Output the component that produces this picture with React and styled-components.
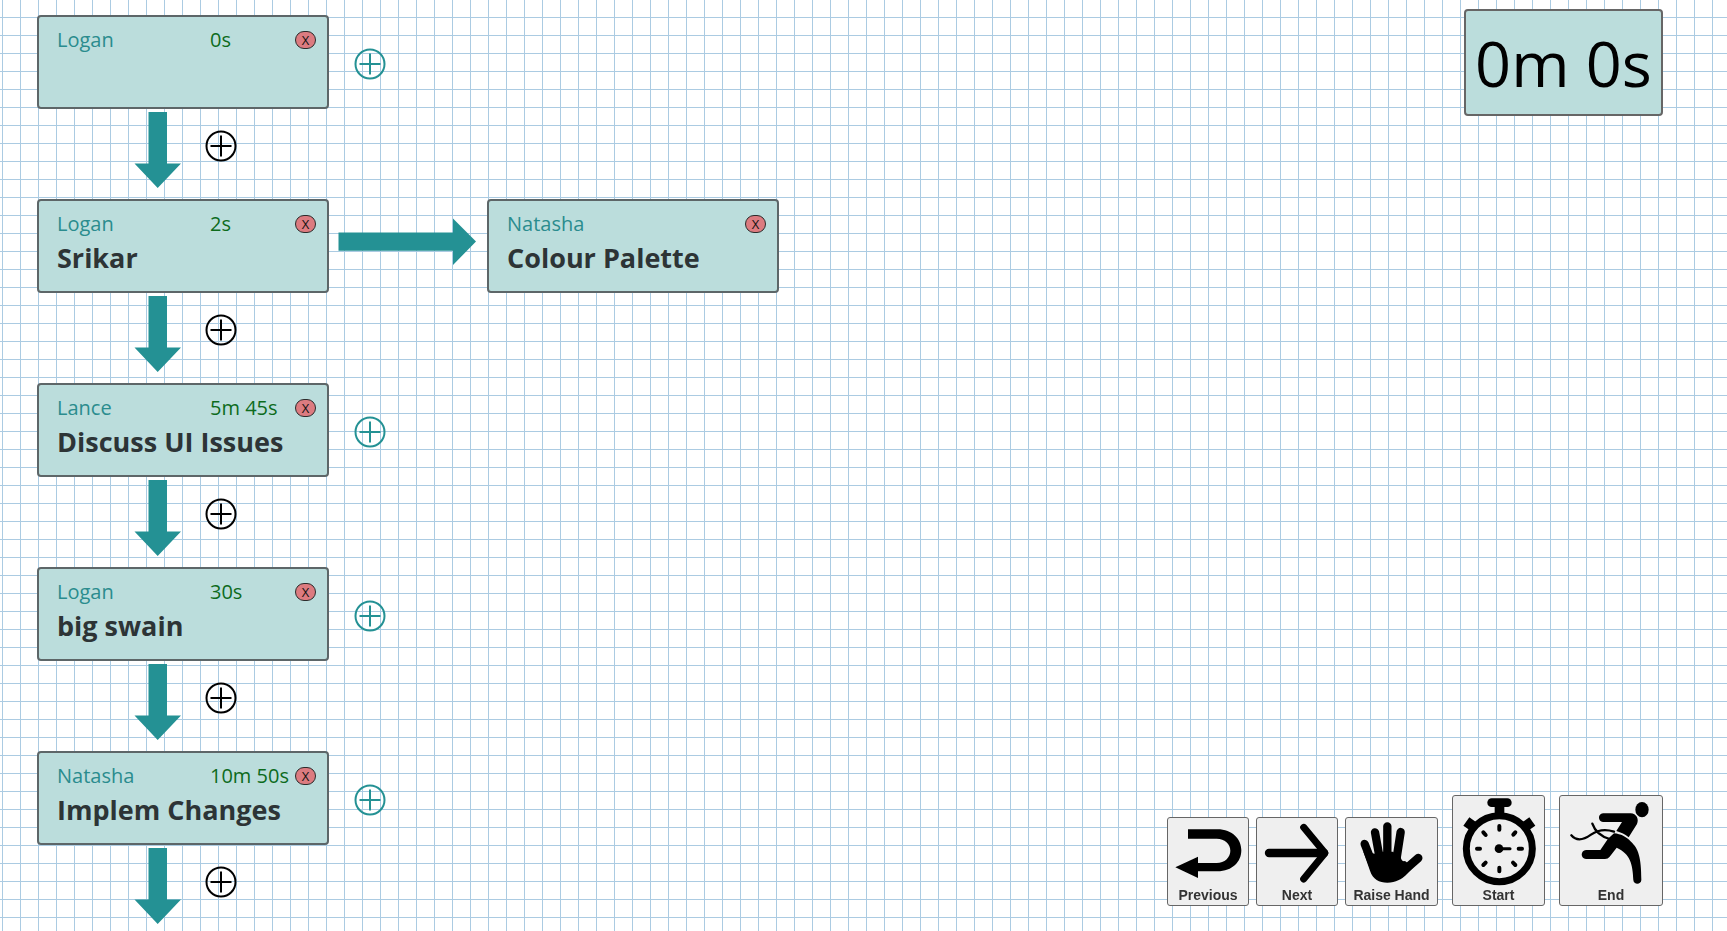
import React from "react";
import styled, { createGlobalStyle } from "styled-components";

const GlobalStyle = createGlobalStyle`
  * { box-sizing: border-box; }
  body {
    margin: 0;
    background-color: #fff;
    background-image:
      linear-gradient(to right, #abcbe2 1px, transparent 1px),
      linear-gradient(to bottom, #abcbe2 1px, transparent 1px);
    background-size: 18px 18px;
    background-position: 2px 17px;
    font-family: "Open Sans", sans-serif;
  }
`;

const Board = styled.main`
  min-height: 100vh;
  padding: 15px 0 0 37px;
`;

const AgendaList = styled.ol`
  list-style: none;
  margin: 0;
  padding: 0;
`;

const AgendaItem = styled.li`
  display: flex;
  flex-direction: column;
`;

const Card = styled.article`
  flex: none;
  width: 292px;
  height: 94px;
  padding: 9px 11px 0 18px;
  border: 2px solid #5d6668;
  border-radius: 4px;
  background: #bbdddc;
`;

const CardHeader = styled.header`
  display: grid;
  grid-template-columns: 153px 1fr auto;
  align-items: center;
  height: 28px;
  font-size: 20px;
  line-height: 28px;
  white-space: nowrap;
`;

const Owner = styled.span`
  color: #2a8c8e;
`;

const Duration = styled.span`
  color: #0d6b1c;
`;

const RemoveButton = styled.button`
  width: 21px;
  height: 18px;
  padding: 0;
  border: 1px solid #2b2b2b;
  border-radius: 9px;
  background: #dc7b80;
  color: #111;
  font-family: inherit;
  font-size: 13px;
  line-height: 16px;
`;

const Title = styled.h2`
  margin: 0;
  color: #2d3436;
  font-size: 27px;
  font-weight: 700;
  line-height: 40px;
  white-space: nowrap;
`;

const AddButton = styled.button`
  display: block;
  width: 32px;
  height: 32px;
  padding: 0;
  border: 0;
  background: none;
  color: ${(p) => (p.$accent ? "#249194" : "#000")};
`;

const BranchArrow = styled.svg`
  flex: none;
  margin: 19px 11px 0 9px;
`;

const CardRow = styled.div`
  display: flex;
  align-items: flex-start;

  ${AddButton} {
    margin: 33px 0 0 25px;
  }
`;

const Connector = styled.div`
  display: flex;
  align-items: flex-start;
  padding: 3px 0 11px 97px;

  ${AgendaItem}:last-child & {
    padding-bottom: 0;
  }

  ${AddButton} {
    margin: 18px 0 0 24px;
  }
`;

const Timer = styled.time`
  position: fixed;
  top: 9px;
  right: 64px;
  display: flex;
  align-items: center;
  justify-content: center;
  width: 199px;
  height: 107px;
  border: 2px solid #666;
  border-radius: 4px;
  background: #bbdddc;
  color: #000;
  font-size: 63px;
  line-height: 88px;
  white-space: nowrap;
`;

const Controls = styled.nav`
  position: fixed;
  right: 64px;
  bottom: 25px;
  display: flex;
  align-items: flex-end;
  gap: 14px;
`;

const ControlGroup = styled.div`
  display: flex;
  gap: 7px;
`;

const ControlButton = styled.button`
  display: flex;
  flex-direction: column;
  align-items: center;
  width: ${(p) => p.$width}px;
  padding: 0 0 2px;
  border: 1px solid #666;
  border-radius: 3px;
  background: #efefef;
  color: #333;
  font-family: "Liberation Sans", Arial, sans-serif;
  font-size: 14px;
  font-weight: 700;
  line-height: 16px;
  white-space: nowrap;

  svg {
    display: block;
    color: #000;
  }
`;

function PlusIcon() {
  return (
    <svg width="32" height="32" viewBox="0 0 32 32" fill="none" stroke="currentColor" strokeWidth="2" aria-hidden="true">
      <circle cx="16" cy="16" r="14.5" />
      <path d="M16 5.5v21M5.5 16h21" />
    </svg>
  );
}

function DownArrow() {
  return (
    <svg width="47" height="76" viewBox="0 0 47 76" fill="#249194" aria-hidden="true">
      <path d="M14.5 0h18.5v51.5h14L23.7 76 .5 51.5h14z" />
    </svg>
  );
}

function RightArrow() {
  return (
    <BranchArrow width="138" height="47" viewBox="0 0 138 47" fill="#249194" aria-hidden="true">
      <path d="M.5 14.5h114.5V.5L138 23.5 115 47V32.7H.5z" />
    </BranchArrow>
  );
}

function PreviousIcon() {
  return (
    <svg width="80" height="69" viewBox="54 114 240 207" fill="currentColor" aria-hidden="true">
      <path d="M114 148H202C248 148 274 178 274 211C274 245 248 274 202 274H144V294L76 262L144 230V249H200C224 249 241 232 241 212C241 192 224 176 200 176H114Z" />
    </svg>
  );
}

function NextIcon() {
  return (
    <svg width="80" height="69" viewBox="325 114 240 207" fill="none" stroke="currentColor" strokeLinecap="round" strokeLinejoin="round" aria-hidden="true">
      <path strokeWidth="25" d="M361 219H526" />
      <path strokeWidth="21" d="M465 142L529 219L465 297" />
    </svg>
  );
}

function HandIcon() {
  return (
    <svg width="91" height="69" viewBox="588 114 273 207" fill="currentColor" stroke="currentColor" strokeLinecap="round" strokeLinejoin="round" aria-hidden="true">
      <path strokeWidth="25" fill="none" d="M644 192L674 268M675 157L690 240M712 139V240M752 156L739 240M805 234L757 276" />
      <path stroke="none" d="M640 215L660 272C668 297 688 308 712 308C738 308 755 297 768 285L790 262L765 243C758 245 753 239 752 230L728 215H698L680 222Z" />
    </svg>
  );
}

function StopwatchIcon() {
  return (
    <svg width="91" height="91" viewBox="73 48 273 273" fill="currentColor" stroke="currentColor" strokeLinecap="round" aria-hidden="true">
      <circle cx="212" cy="206" r="99" fill="none" strokeWidth="21" />
      <path fill="none" strokeWidth="26" d="M189 68H236" />
      <path stroke="none" d="M198 75H227V102H198ZM122 112L146 129L126 152L104 137ZM302 112L278 129L298 152L320 137Z" />
      <path fill="none" strokeWidth="12" d="M212 138V149M212 263V274M145 206H154M270 206H280M164 157L171 165M260 157L254 164M164 255L171 248M260 255L253 248" />
      <circle cx="211" cy="206" r="13" stroke="none" />
      <path strokeWidth="9" d="M211 206H244" />
    </svg>
  );
}

function FinishIcon() {
  return (
    <svg width="102" height="91" viewBox="391 48 306 273" fill="currentColor" aria-hidden="true">
      <ellipse cx="637" cy="89" rx="20" ry="23" />
      <path d="M520 100H603C620 101 629 117 622 132L597 172C587 163 574 157 560 153L577 126H520C504 125 504 101 520 100Z" />
      <path d="M553 160C574 162 589 170 604 185C626 205 635 232 635 300C634 315 612 315 611 300C609 252 602 222 561 203L540 230Q535 237 526 237H469C452 235 452 212 469 210H512L535 176Z" />
      <path fill="none" stroke="currentColor" strokeWidth="7" strokeLinecap="round" d="M425 166C442 186 463 179 484 164C507 148 528 147 553 155M488 131C496 154 511 169 540 177" />
    </svg>
  );
}

const agenda = [
  { owner: "Logan", duration: "0s", title: "" },
  { owner: "Logan", duration: "2s", title: "Srikar", branch: { owner: "Natasha", duration: "", title: "Colour Palette" } },
  { owner: "Lance", duration: "5m 45s", title: "Discuss UI Issues" },
  { owner: "Logan", duration: "30s", title: "big swain" },
  { owner: "Natasha", duration: "10m 50s", title: "Implem Changes" },
];

function AgendaCard({ owner, duration, title }) {
  return (
    <Card>
      <CardHeader>
        <Owner>{owner}</Owner>
        <Duration>{duration}</Duration>
        <RemoveButton type="button">X</RemoveButton>
      </CardHeader>
      {title && <Title>{title}</Title>}
    </Card>
  );
}

export default function App() {
  return (
    <>
      <GlobalStyle />
      <Board>
        <AgendaList>
          {agenda.map((item, index) => (
            <AgendaItem key={index}>
              <CardRow>
                <AgendaCard {...item} />
                {item.branch ? (
                  <>
                    <RightArrow />
                    <AgendaCard {...item.branch} />
                  </>
                ) : (
                  <AddButton type="button" $accent aria-label="Add branch">
                    <PlusIcon />
                  </AddButton>
                )}
              </CardRow>
              <Connector>
                <DownArrow />
                <AddButton type="button" aria-label="Add item below">
                  <PlusIcon />
                </AddButton>
              </Connector>
            </AgendaItem>
          ))}
        </AgendaList>
      </Board>
      <Timer>0m 0s</Timer>
      <Controls aria-label="Meeting controls">
        <ControlGroup>
          <ControlButton type="button" $width={82}>
            <PreviousIcon />
            Previous
          </ControlButton>
          <ControlButton type="button" $width={82}>
            <NextIcon />
            Next
          </ControlButton>
          <ControlButton type="button" $width={93}>
            <HandIcon />
            Raise Hand
          </ControlButton>
        </ControlGroup>
        <ControlButton type="button" $width={93}>
          <StopwatchIcon />
          Start
        </ControlButton>
        <ControlButton type="button" $width={104}>
          <FinishIcon />
          End
        </ControlButton>
      </Controls>
    </>
  );
}
